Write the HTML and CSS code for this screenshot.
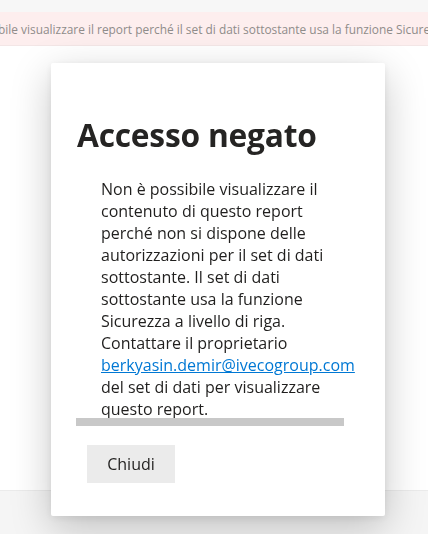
FILE: index.html
```html
<!DOCTYPE html>
<html lang="it">
<head>
<meta charset="utf-8">
<title>Accesso negato</title>
<link rel="stylesheet" href="styles.css">
</head>
<body>
<div class="topstrip"></div>
<div class="banner"><span class="banner-text">Non è possibile visualizzare il report perché il set di dati sottostante usa la funzione Sicurezza a livello di riga.</span></div>
<div class="canvas"></div>
<div class="footer"></div>

<div class="overlay">
  <div class="dialog" role="dialog">
    <h1 class="title">Accesso negato</h1>
    <div class="scroll">
      <p class="message">Non è possibile visualizzare il<br>contenuto di questo report<br>perché non si dispone delle<br>autorizzazioni per il set di dati<br>sottostante. Il set di dati<br>sottostante usa la funzione<br>Sicurezza a livello di riga.<br>Contattare il proprietario<br><a class="mail" href="#">berkyasin.demir@ivecogroup.com</a><br>del set di dati per visualizzare<br>questo report.</p>
      <div class="hbar"></div>
    </div>
    <div class="actions">
      <button class="btn" type="button">Chiudi</button>
    </div>
  </div>
</div>
</body>
</html>
```

FILE: styles.css
```css
html, body {
  margin: 0;
  padding: 0;
}
body {
  width: 428px;
  height: 534px;
  overflow: hidden;
  background: #f4f4f4;
  font-family: "Open Sans", "Noto Sans", sans-serif;
  color: #252423;
}
.topstrip {
  height: 12px;
  background: #f7f7f7;
}
.banner {
  height: 33px;
  background: #fdeeee;
  border-bottom: 1px solid #f3e6e6;
  display: flex;
  align-items: center;
  overflow: hidden;
  white-space: nowrap;
}
.banner-text {
  font-size: 11.9px;
  color: #8f8c8a;
  text-indent: -67px;
  display: block;
}
.canvas {
  height: 444px;
  background: #ffffff;
  border-bottom: 1px solid #ebebeb;
}
.footer {
  height: 44px;
  background: #f5f5f5;
}
.overlay {
  position: fixed;
  inset: 0;
}
.dialog {
  position: absolute;
  left: 51px;
  top: 63px;
  width: 334px;
  height: 453px;
  box-sizing: border-box;
  background: #ffffff;
  border-radius: 2px;
  box-shadow: 0 12px 40px rgba(0, 0, 0, 0.22), 0 2px 8px rgba(0, 0, 0, 0.08);
  padding: 50px 0 0 25px;
}
.title {
  margin: 0 0 0 1px;
  font-size: 31.7px;
  line-height: 44px;
  font-weight: 700;
  color: #252423;
  letter-spacing: -0.2px;
}
.scroll {
  padding-top: 21px;
  width: 268px;
}
.message {
  margin: 0 0 -2px;
  padding-left: 25px;
  font-size: 16px;
  line-height: 22px;
  color: #201f1e;
  white-space: nowrap;
}
.mail {
  color: #0078d4;
  text-decoration: underline;
}
.hbar {
  position: relative;
  height: 8px;
  background: #c8c8c8;
}
.actions {
  padding: 19px 0 0 11px;
}
.btn {
  width: 88px;
  height: 38px;
  border: none;
  border-radius: 0;
  background: #ebebeb;
  color: #252423;
  font-family: "Open Sans", "Noto Sans", sans-serif;
  font-size: 16px;
  padding: 0;
}
```
